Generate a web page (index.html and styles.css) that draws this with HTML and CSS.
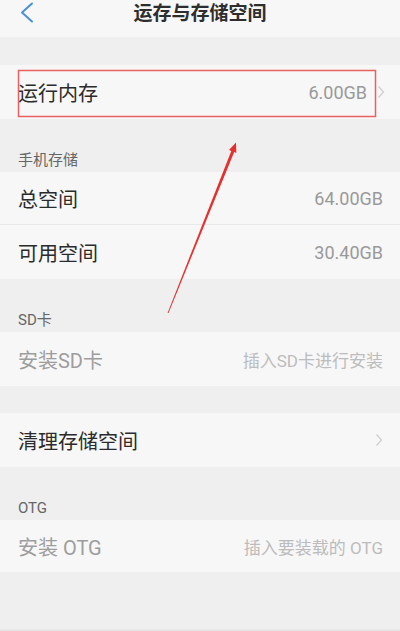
FILE: index.html
```html
<!DOCTYPE html>
<html lang="zh-CN">
<head>
<meta charset="utf-8">
<title>运存与存储空间</title>
<link rel="stylesheet" href="styles.css">
</head>
<body>
<div class="page">
  <header class="header">
    <svg class="back" width="14" height="22" viewBox="0 0 14 22"><path d="M12 1.5 L2 10.5 L12 19.5" fill="none" stroke="#4a90d9" stroke-width="2" stroke-linecap="round" stroke-linejoin="round"/></svg>
    <h1 class="title">运存与存储空间</h1>
  </header>
  <div class="gap"></div>
  <div class="row">
    <span class="label">运行内存</span>
    <span class="right"><span class="value">6.00GB</span><svg class="arrow" width="8" height="14" viewBox="0 0 8 14"><path d="M1.5 1.5 L6.5 7 L1.5 12.5" fill="none" stroke="#cfcfcf" stroke-width="1.3"/></svg></span>
  </div>
  <div class="section"><span class="section-label">手机存储</span></div>
  <div class="row divided">
    <span class="label">总空间</span>
    <span class="value">64.00GB</span>
  </div>
  <div class="row">
    <span class="label">可用空间</span>
    <span class="value">30.40GB</span>
  </div>
  <div class="section"><span class="section-label">SD卡</span></div>
  <div class="row">
    <span class="label disabled">安装SD卡</span>
    <span class="hint">插入SD卡进行安装</span>
  </div>
  <div class="gap small"></div>
  <div class="row">
    <span class="label">清理存储空间</span>
    <svg class="arrow" width="8" height="14" viewBox="0 0 8 14"><path d="M1.5 1.5 L6.5 7 L1.5 12.5" fill="none" stroke="#cfcfcf" stroke-width="1.3"/></svg>
  </div>
  <div class="section"><span class="section-label">OTG</span></div>
  <div class="row short">
    <span class="label disabled">安装 OTG</span>
    <span class="hint">插入要装载的 OTG</span>
  </div>
  <svg class="annotation" width="400" height="631" viewBox="0 0 400 631">
    <rect x="18.5" y="70.5" width="357" height="46" fill="none" stroke="#e8605f" stroke-width="1.5"/>
    <polygon points="236,142.5 236.3,153 234.2,152.1 168.5,313.1 167.6,312.9 231.3,150.9 229,150" fill="#e6302e"/>
  </svg>
</div>
</body>
</html>
```

FILE: styles.css
```css
html, body {
  margin: 0;
  padding: 0;
}
body {
  background: #efefef;
  font-family: Roboto, "Noto Sans CJK SC", sans-serif;
}
.page {
  position: relative;
  width: 400px;
  height: 631px;
  overflow: hidden;
  background: #efefef;
  box-shadow: inset 0 -2px 0 #e6e6e6;
}
.header {
  height: 37px;
  background: #f7f7f7;
  display: flex;
  justify-content: center;
  align-items: flex-start;
  position: relative;
}
.back {
  position: absolute;
  left: 20px;
  top: 2px;
}
.title {
  margin: 3px 0 0;
  font-size: 19px;
  line-height: 22px;
  font-weight: 700;
  color: #2e2e2e;
}
.gap {
  height: 28px;
}
.gap.small {
  height: 27px;
}
.row {
  height: 54px;
  box-sizing: border-box;
  padding: 0 17px 0 18px;
  background: #f7f7f7;
  display: flex;
  align-items: center;
  justify-content: space-between;
}
.row.divided {
  height: 53px;
  border-bottom: 1px solid #e9e9e9;
  background-clip: padding-box;
}
.row.short {
  height: 52px;
}
.label {
  font-size: 20px;
  color: #2b2b2b;
}
.label.disabled {
  color: #9d9d9d;
}
.value {
  font-size: 18px;
  color: #999;
}
.right {
  display: flex;
  align-items: center;
  gap: 10px;
  margin-right: -2px;
}
.arrow {
  display: block;
}
.hint {
  font-size: 17px;
  color: #bcbcbc;
}
.section {
  height: 53px;
  box-sizing: border-box;
  padding: 0 18px 2px;
  display: flex;
  align-items: flex-end;
}
.section-label {
  font-size: 15px;
  line-height: 20px;
  color: #666;
}
.annotation {
  position: absolute;
  left: 0;
  top: 0;
  pointer-events: none;
}
```
